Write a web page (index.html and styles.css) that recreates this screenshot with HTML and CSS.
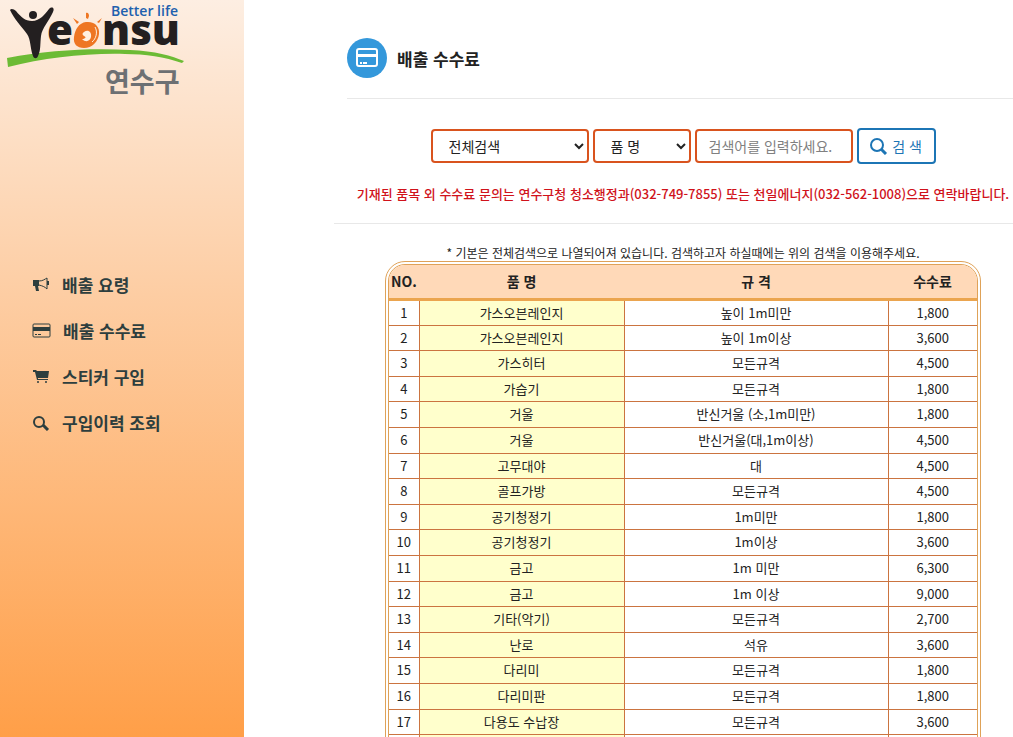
FILE: index.html
```html
<!DOCTYPE html>
<html lang="ko">
<head>
	<meta charset="UTF-8">
	<meta name="viewport" content="width=device-width, initial-scale=1">
	<title>배출 수수료</title>
	<link rel="stylesheet" href="styles.css">
</head>
<body>
	<aside class="sidebar">
		<a href="#" class="logo">
			<svg width="190" height="100" viewBox="0 0 190 100" role="img" aria-label="Yeonsu 연수구">
				<path fill="#6cbb35" d="M7 58C50 50 90 48 130 50C155 51 172 56 184 61L182 63C165 57 145 54 125 54C85 53 45 58 8 67Z"/>
				<path fill="#231f20" d="M10 10C11 8 14 9 16 11C21 17 25 21 32 21C40 21 45 14 49 9C52 6 55 8 53 12C49 21 42 28 41 36C40 44 41 50 38 56C37 59 34 59 33 56C30 48 31 40 27 34C22 27 14 19 10 10Z"/>
				<circle cx="33" cy="15" r="4" fill="#231f20"/>
				<path fill="#ee7623" d="M86 22C95 21 100 27 99 34C98 42 92 48 84 48C77 48 73 44 74 37C75 29 79 23 86 22Z"/>
				<path fill="#fff0e0" d="M84 32C88 29 92 32 91 37C90 41 86 43 82 39C85 39 87 37 84 36C82 35 82 33 84 32Z"/>
				<path fill="none" stroke="#fff0e0" d="M95 27C98 32 96 39 92 42"/>
				<path fill="#ee7623" d="M73 18L79 22L77 24ZM86 13C88 12 89 14 89 16L88 19L86 18ZM102 18L99 23L97 22Z"/>
				<text class="logo-word" x="47" y="45">e</text>
				<text class="logo-word" x="102" y="45">nsu</text>
				<text class="logo-slogan" x="111" y="16">Better life</text>
				<text class="logo-name" x="105" y="92">연수구</text>
			</svg>
		</a>
		<nav class="menu">
			<a href="#">
				<svg width="18" height="18" viewBox="0 0 18 18"><path fill="currentColor" d="M1 5h6v6H6l1 5H4L3 11H1Z"/><path fill="none" stroke="currentColor" stroke-width="1" d="M7 6C11 6 13 4 15 3V14C13 12 11 11 7 10"/><path fill="currentColor" d="M15 6h2v4h-2Z"/></svg>
				배출 요령
			</a>
			<a href="#">
				<svg width="19" height="18" viewBox="0 0 19 18"><rect x="1" y="3" width="17" height="13" rx="1" fill="none" stroke="currentColor"/><path fill="currentColor" d="M1 6h17v4H1ZM3 13h2v1H3ZM6 13h3v1H6Z"/></svg>
				배출 수수료
			</a>
			<a href="#">
				<svg width="18" height="18" viewBox="0 0 18 18"><path fill="currentColor" d="M1 3h3l1 1h12l-1 7H6v1h10v1H5L3 5H1Z"/><circle cx="6" cy="15" r="1" fill="currentColor"/><circle cx="14" cy="15" r="1" fill="currentColor"/></svg>
				스티커 구입
			</a>
			<a href="#">
				<svg width="18" height="18" viewBox="0 0 18 18"><circle cx="7" cy="9" r="5" fill="none" stroke="currentColor" stroke-width="2"/><path stroke="currentColor" stroke-width="3" d="M11 12l5 5"/></svg>
				구입이력 조회
			</a>
		</nav>
	</aside>
	<main class="content">
		<header class="title">
			<span class="title-icon">
				<svg width="24" height="20" viewBox="0 0 24 20"><rect x="2" y="1" width="20" height="17" rx="2" fill="none" stroke="#fff" stroke-width="2"/><path fill="#fff" d="M3 6h18v3H3ZM5 14h2v2H5ZM8 14h4v2H8Z"/></svg>
			</span>
			<h1>배출 수수료</h1>
		</header>
		<section class="search">
			<form class="search-form">
				<select class="field wide" aria-label="분류">
					<option>전체검색</option>
				</select>
				<select class="field narrow" aria-label="검색 항목">
					<option>품 명</option>
				</select>
				<input type="text" class="field wide keyword" placeholder="검색어를 입력하세요." aria-label="검색어">
				<button type="button" class="btn-search">
					<svg width="18" height="18" viewBox="0 0 18 18"><circle cx="7" cy="8" r="6" fill="none" stroke="currentColor" stroke-width="2"/><path stroke="currentColor" stroke-width="3" d="M11 12l5 5"/></svg>
					검 색
				</button>
			</form>
			<p class="notice">기재된 품목 외 수수료 문의는 연수구청 청소행정과(032-749-7855) 또는 천일에너지(032-562-1008)으로 연락바랍니다.</p>
		</section>
		<section class="list">
			<p class="guide">* 기본은 전체검색으로 나열되어져 있습니다. 검색하고자 하실때에는 위의 검색을 이용해주세요.</p>
			<div class="table-box">
				<table>
					<thead>
						<tr><th class="no">NO.</th><th class="item">품 명</th><th>규 격</th><th class="fee">수수료</th></tr>
					</thead>
					<tbody>
						<tr><td>1</td><td>가스오븐레인지</td><td>높이 1m미만</td><td>1,800</td></tr>
						<tr><td>2</td><td>가스오븐레인지</td><td>높이 1m이상</td><td>3,600</td></tr>
						<tr><td>3</td><td>가스히터</td><td>모든규격</td><td>4,500</td></tr>
						<tr><td>4</td><td>가습기</td><td>모든규격</td><td>1,800</td></tr>
						<tr><td>5</td><td>거울</td><td>반신거울 (소,1m미만)</td><td>1,800</td></tr>
						<tr><td>6</td><td>거울</td><td>반신거울(대,1m이상)</td><td>4,500</td></tr>
						<tr><td>7</td><td>고무대야</td><td>대</td><td>4,500</td></tr>
						<tr><td>8</td><td>골프가방</td><td>모든규격</td><td>4,500</td></tr>
						<tr><td>9</td><td>공기청정기</td><td>1m미만</td><td>1,800</td></tr>
						<tr><td>10</td><td>공기청정기</td><td>1m이상</td><td>3,600</td></tr>
						<tr><td>11</td><td>금고</td><td>1m 미만</td><td>6,300</td></tr>
						<tr><td>12</td><td>금고</td><td>1m 이상</td><td>9,000</td></tr>
						<tr><td>13</td><td>기타(악기)</td><td>모든규격</td><td>2,700</td></tr>
						<tr><td>14</td><td>난로</td><td>석유</td><td>3,600</td></tr>
						<tr><td>15</td><td>다리미</td><td>모든규격</td><td>1,800</td></tr>
						<tr><td>16</td><td>다리미판</td><td>모든규격</td><td>1,800</td></tr>
						<tr><td>17</td><td>다용도 수납장</td><td>모든규격</td><td>3,600</td></tr>
						<tr><td></td><td></td><td></td><td></td></tr>
					</tbody>
				</table>
			</div>
		</section>
	</main>
</body>
</html>
```

FILE: styles.css
```css
* {
	padding: 0;
	margin: 0;
	box-sizing: border-box;
}
body {
	display: flex;
	height: 100vh;
	overflow: hidden;
	background: #fff;
	color: #222;
	font-family: "Noto Sans CJK KR", sans-serif;
	font-size: 13px;
}
a {
	text-decoration: none;
}
svg {
	display: block;
	flex: none;
}

/* 왼쪽 메뉴 */
.sidebar {
	flex: none;
	width: 244px;
	background: linear-gradient(#fdeee2, #fdcda3 40%, #ff9f48);
}
.logo {
	display: block;
}
.logo-word {
	font: 800 42px "Open Sans", sans-serif;
	fill: #231f20;
}
.logo-slogan {
	font: 600 14px "Open Sans", sans-serif;
	fill: #2060ae;
}
.logo-name {
	font: bold 27px "Noto Sans CJK KR", sans-serif;
	fill: #6d7073;
}
.menu {
	display: flex;
	flex-direction: column;
	margin-top: 161px;
	padding-left: 32px;
}
.menu a {
	display: flex;
	align-items: center;
	gap: 12px;
	height: 46px;
	color: #2d3e3e;
	font-size: 17px;
	font-weight: bold;
}

/* 본문 */
.content {
	flex: 1;
	min-width: 0;
	padding-left: 90px;
}
.title {
	display: flex;
	align-items: center;
	gap: 10px;
	height: 99px;
	margin-left: 13px;
	padding-top: 18px;
	border-bottom: 1px solid #e8e8e8;
}
.title-icon {
	display: flex;
	align-items: center;
	justify-content: center;
	width: 40px;
	height: 40px;
	border-radius: 50%;
	background: #3498db;
}
.title h1 {
	font-size: 17px;
}
.search {
	padding: 29px 0 19px 19px;
	border-bottom: 1px solid #e8e8e8;
}
.search-form {
	display: flex;
	align-items: center;
	justify-content: center;
	gap: 4px;
}
.field {
	height: 34px;
	padding-left: 12px;
	border: 2px solid #d9531e;
	border-radius: 4px;
	background: #fff;
	color: #222;
	font-family: inherit;
	font-size: 14px;
}
.wide {
	width: 158px;
}
.narrow {
	width: 98px;
}
.keyword::placeholder {
	color: #808080;
}
.btn-search {
	display: flex;
	align-items: center;
	justify-content: center;
	gap: 4px;
	width: 79px;
	height: 36px;
	border: 2px solid #1c75b5;
	border-radius: 4px;
	background: #fff;
	color: #1c75b5;
	font-family: inherit;
	font-size: 14px;
}
.notice {
	margin-top: 20px;
	color: #d0121b;
	font-weight: 500;
	line-height: 20px;
	text-align: center;
	white-space: nowrap;
}
.list {
	padding: 20px 0 0 19px;
}
.guide {
	font-size: 12px;
	line-height: 17px;
	text-align: center;
	white-space: nowrap;
}
.table-box {
	width: 596px;
	margin: 0 auto;
	overflow: hidden;
	border: 4px double #dfa258;
	border-radius: 20px;
}
table {
	width: 100%;
	border-collapse: collapse;
	table-layout: fixed;
}
.no {
	width: 30px;
}
.item {
	width: 205px;
}
.fee {
	width: 89px;
}
th {
	height: 34px;
	border-bottom: 3px solid #eba54f;
	background: #ffd9b8;
	font-size: 14px;
	white-space: nowrap;
}
td {
	height: 26px;
	border: 1px solid #cb7440;
	line-height: 20px;
	text-align: center;
}
td:first-child {
	border-left: 0;
}
td:last-child {
	border-right: 0;
}
td:nth-child(2) {
	background: #ffffcc;
}
/* 줄 높이를 고르게 */
tr:nth-child(5n+2) td, tr:nth-child(5n+4) td {
	height: 25px;
}
```
